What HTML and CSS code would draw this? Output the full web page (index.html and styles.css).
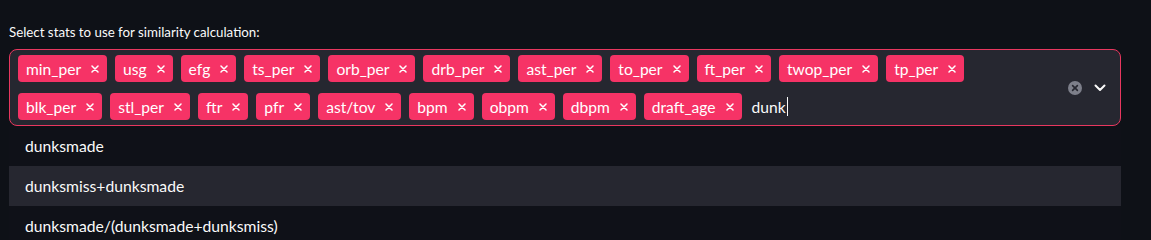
FILE: index.html
```html
<!DOCTYPE html>
<html lang="en">
<head>
    <meta charset="UTF-8">
    <title>Similarity stats</title>
    <link rel="stylesheet" href="styles.css">
</head>
<body>
<div class="field">
    <label class="field-label">Select stats to use for similarity calculation:</label>
    <div class="select-box">
        <div class="tags">
            <span class="tag">min_per <svg class="tag-x" viewBox="0 0 8 8"><path d="M1 1 L7 7 M7 1 L1 7"/></svg></span>
            <span class="tag">usg <svg class="tag-x" viewBox="0 0 8 8"><path d="M1 1 L7 7 M7 1 L1 7"/></svg></span>
            <span class="tag">efg <svg class="tag-x" viewBox="0 0 8 8"><path d="M1 1 L7 7 M7 1 L1 7"/></svg></span>
            <span class="tag">ts_per <svg class="tag-x" viewBox="0 0 8 8"><path d="M1 1 L7 7 M7 1 L1 7"/></svg></span>
            <span class="tag">orb_per <svg class="tag-x" viewBox="0 0 8 8"><path d="M1 1 L7 7 M7 1 L1 7"/></svg></span>
            <span class="tag">drb_per <svg class="tag-x" viewBox="0 0 8 8"><path d="M1 1 L7 7 M7 1 L1 7"/></svg></span>
            <span class="tag">ast_per <svg class="tag-x" viewBox="0 0 8 8"><path d="M1 1 L7 7 M7 1 L1 7"/></svg></span>
            <span class="tag">to_per <svg class="tag-x" viewBox="0 0 8 8"><path d="M1 1 L7 7 M7 1 L1 7"/></svg></span>
            <span class="tag">ft_per <svg class="tag-x" viewBox="0 0 8 8"><path d="M1 1 L7 7 M7 1 L1 7"/></svg></span>
            <span class="tag">twop_per <svg class="tag-x" viewBox="0 0 8 8"><path d="M1 1 L7 7 M7 1 L1 7"/></svg></span>
            <span class="tag">tp_per <svg class="tag-x" viewBox="0 0 8 8"><path d="M1 1 L7 7 M7 1 L1 7"/></svg></span>
            <span class="tag">blk_per <svg class="tag-x" viewBox="0 0 8 8"><path d="M1 1 L7 7 M7 1 L1 7"/></svg></span>
            <span class="tag">stl_per <svg class="tag-x" viewBox="0 0 8 8"><path d="M1 1 L7 7 M7 1 L1 7"/></svg></span>
            <span class="tag">ftr <svg class="tag-x" viewBox="0 0 8 8"><path d="M1 1 L7 7 M7 1 L1 7"/></svg></span>
            <span class="tag">pfr <svg class="tag-x" viewBox="0 0 8 8"><path d="M1 1 L7 7 M7 1 L1 7"/></svg></span>
            <span class="tag">ast/tov <svg class="tag-x" viewBox="0 0 8 8"><path d="M1 1 L7 7 M7 1 L1 7"/></svg></span>
            <span class="tag">bpm <svg class="tag-x" viewBox="0 0 8 8"><path d="M1 1 L7 7 M7 1 L1 7"/></svg></span>
            <span class="tag">obpm <svg class="tag-x" viewBox="0 0 8 8"><path d="M1 1 L7 7 M7 1 L1 7"/></svg></span>
            <span class="tag">dbpm <svg class="tag-x" viewBox="0 0 8 8"><path d="M1 1 L7 7 M7 1 L1 7"/></svg></span>
            <span class="tag">draft_age <svg class="tag-x" viewBox="0 0 8 8"><path d="M1 1 L7 7 M7 1 L1 7"/></svg></span>
            <span class="query">dunk<span class="caret"></span></span>
        </div>
        <div class="controls">
            <svg class="clear" width="14" height="14" viewBox="0 0 14 14">
                <circle cx="7" cy="7" r="7" fill="#7d7f8a"/>
                <path d="M4.6 4.6 L9.4 9.4 M9.4 4.6 L4.6 9.4" stroke="#262730" stroke-width="1.6" stroke-linecap="round"/>
            </svg>
            <svg class="chevron" width="12" height="8" viewBox="0 0 12 8">
                <path d="M1.5 1.5 L6 6 L10.5 1.5" fill="none" stroke="#fafafa" stroke-width="2" stroke-linecap="round" stroke-linejoin="round"/>
            </svg>
        </div>
    </div>
    <ul class="options">
        <li>dunksmade</li>
        <li class="active">dunksmiss+dunksmade</li>
        <li>dunksmade/(dunksmade+dunksmiss)</li>
    </ul>
</div>
</body>
</html>
```

FILE: styles.css
```css
body { margin: 0; background-color: #0e1117; color: #fafafa; font-family: "Source Sans Pro", Lato, "Noto Sans", sans-serif; overflow: hidden; }
.field { padding: 22px 30px 0 9px; }
.field-label { display: block; font-size: 13.3px; line-height: 20px; margin-bottom: 7px; color: #fafafa; }
.select-box { display: flex; align-items: center; border: 1px solid #e8375f; border-radius: 8px; background-color: #262730; padding: 5px 0 5px 8px; }
.tags { flex-grow: 1; display: flex; flex-wrap: wrap; align-items: center; column-gap: 8px; row-gap: 11px; }
.tag { display: flex; align-items: center; height: 27px; padding: 0 8px; border-radius: 4px; background-color: #f63366; color: #fff; font-size: 15.6px; }
.tag-x { width: 8px; height: 8px; margin-left: 10px; stroke: #fff; stroke-width: 1.5; stroke-linecap: round; }
.query { display: flex; align-items: center; margin-left: 2px; font-size: 15.6px; }
.caret { display: inline-block; width: 1px; height: 19px; background: #fafafa; margin-left: 1px; }
.controls { display: flex; align-items: center; gap: 12px; padding: 0 14px 0 20px; }
.options { list-style: none; margin: 0; padding: 0; background-color: #0f1118; }
.options li { height: 40px; line-height: 40px; padding-left: 16px; font-size: 15.7px; color: #fafafa; }
.options li.active { background-color: #262730; }
```
